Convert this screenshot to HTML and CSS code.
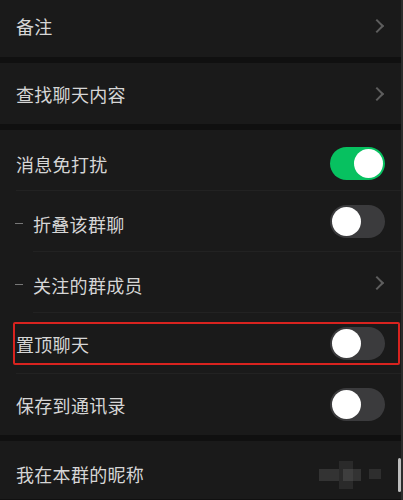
FILE: index.html
```html
<!DOCTYPE html>
<html lang="zh">
<head>
<meta charset="utf-8">
<link rel="stylesheet" href="styles.css">
</head>
<body>
<div class="page">
  <div class="group">
    <div class="row first"><span class="label">备注</span><span class="chev"></span></div>
  </div>
  <div class="group">
    <div class="row"><span class="label">查找聊天内容</span><span class="chev"></span></div>
  </div>
  <div class="group">
    <div class="row sep"><span class="label">消息免打扰</span><span class="toggle on"><span class="knob"></span></span></div>
    <div class="row sep-in"><span class="label"><span class="dash"></span>折叠该群聊</span><span class="toggle"><span class="knob"></span></span></div>
    <div class="row sep-in"><span class="label"><span class="dash"></span>关注的群成员</span><span class="chev"></span></div>
    <div class="row sep marked"><span class="label">置顶聊天</span><span class="toggle"><span class="knob"></span></span><span class="redbox"></span></div>
    <div class="row"><span class="label">保存到通讯录</span><span class="toggle"><span class="knob"></span></span></div>
  </div>
  <div class="group">
    <div class="row last"><span class="label">我在本群的昵称</span>
      <span class="blur">
        <span class="b b1"></span><span class="b b2"></span><span class="b b3"></span><span class="b b4"></span>
      </span>
    </div>
  </div>
  <span class="scrollbar"></span>
</div>
</body>
</html>
```
FILE: styles.css
```css
* { box-sizing: border-box; }
html, body { margin: 0; padding: 0; background: #111111; }
.page {
  position: relative;
  width: 403px;
  height: 500px;
  overflow: hidden;
  background: #101010;
  display: flex;
  flex-direction: column;
  gap: 6px;
  border-right: 2px solid #2b2b2b;
  font-family: "Noto Sans CJK SC", "Noto Sans", sans-serif;
}
.group { background: #1a1a1a; display: flex; flex-direction: column; }
.row {
  position: relative;
  height: 61px;
  display: flex;
  align-items: center;
  justify-content: space-between;
  padding: 0 16px 0 16px;
}
.row.first { height: 57px; padding-bottom: 6px; }
.row.sep:first-child, .group:nth-child(3) .row:first-child { padding-top: 6px; }
.row.last { height: 58px; padding-top: 8px; align-items: center; }
.row.sep::after, .row.sep-in::after {
  content: "";
  position: absolute;
  left: 16px;
  right: 0;
  bottom: 0;
  height: 1px;
  background: #222222;
}
.row.sep-in::after { left: 33px; }
.label {
  display: flex;
  align-items: center;
  color: #d6d6d6;
  font-size: 18px;
  line-height: 24px;
  letter-spacing: 0.3px;
}
.dash {
  display: inline-block;
  width: 8px;
  height: 1px;
  background: #777;
  margin-right: 10px;
  margin-left: -1px;
}
.group:nth-child(3) .row:nth-child(2) .label,
.group:nth-child(3) .row:nth-child(3) .label { padding-top: 4px; }
.chev {
  width: 10px;
  height: 10px;
  border-top: 2px solid #5e5e5e;
  border-right: 2px solid #5e5e5e;
  transform: rotate(45deg);
  margin-right: 3px;
}
.toggle {
  width: 55px;
  height: 33px;
  border-radius: 17px;
  background: #3b3b3d;
  display: flex;
  align-items: center;
  padding: 2px;
  margin-right: 0;
}
.toggle.on { background: #07c160; justify-content: flex-end; }
.knob {
  width: 29px;
  height: 29px;
  border-radius: 50%;
  background: #ffffff;
}
.redbox {
  position: absolute;
  left: 13px;
  right: 1px;
  top: 9px;
  bottom: 9px;
  border: 2px solid #d8231f;
  border-radius: 2px;
}
.blur {
  position: relative;
  width: 70px;
  height: 34px;
  margin-right: -2px;
}
.b { position: absolute; background: #2c2c2c; }
.b1 { left: 2px; top: 12px; width: 42px; height: 12px; background: #333; }
.b2 { left: 22px; top: 4px; width: 14px; height: 28px; background: #2a2a2a; }
.b3 { left: 26px; top: 12px; width: 10px; height: 12px; background: #3e3e3e; }
.b4 { left: 52px; top: 12px; width: 12px; height: 10px; background: #2e2e2e; }
.scrollbar {
  position: absolute;
  right: 0;
  top: 458px;
  width: 3px;
  height: 34px;
  border-radius: 2px;
  background: #bdbdbd;
}
```
